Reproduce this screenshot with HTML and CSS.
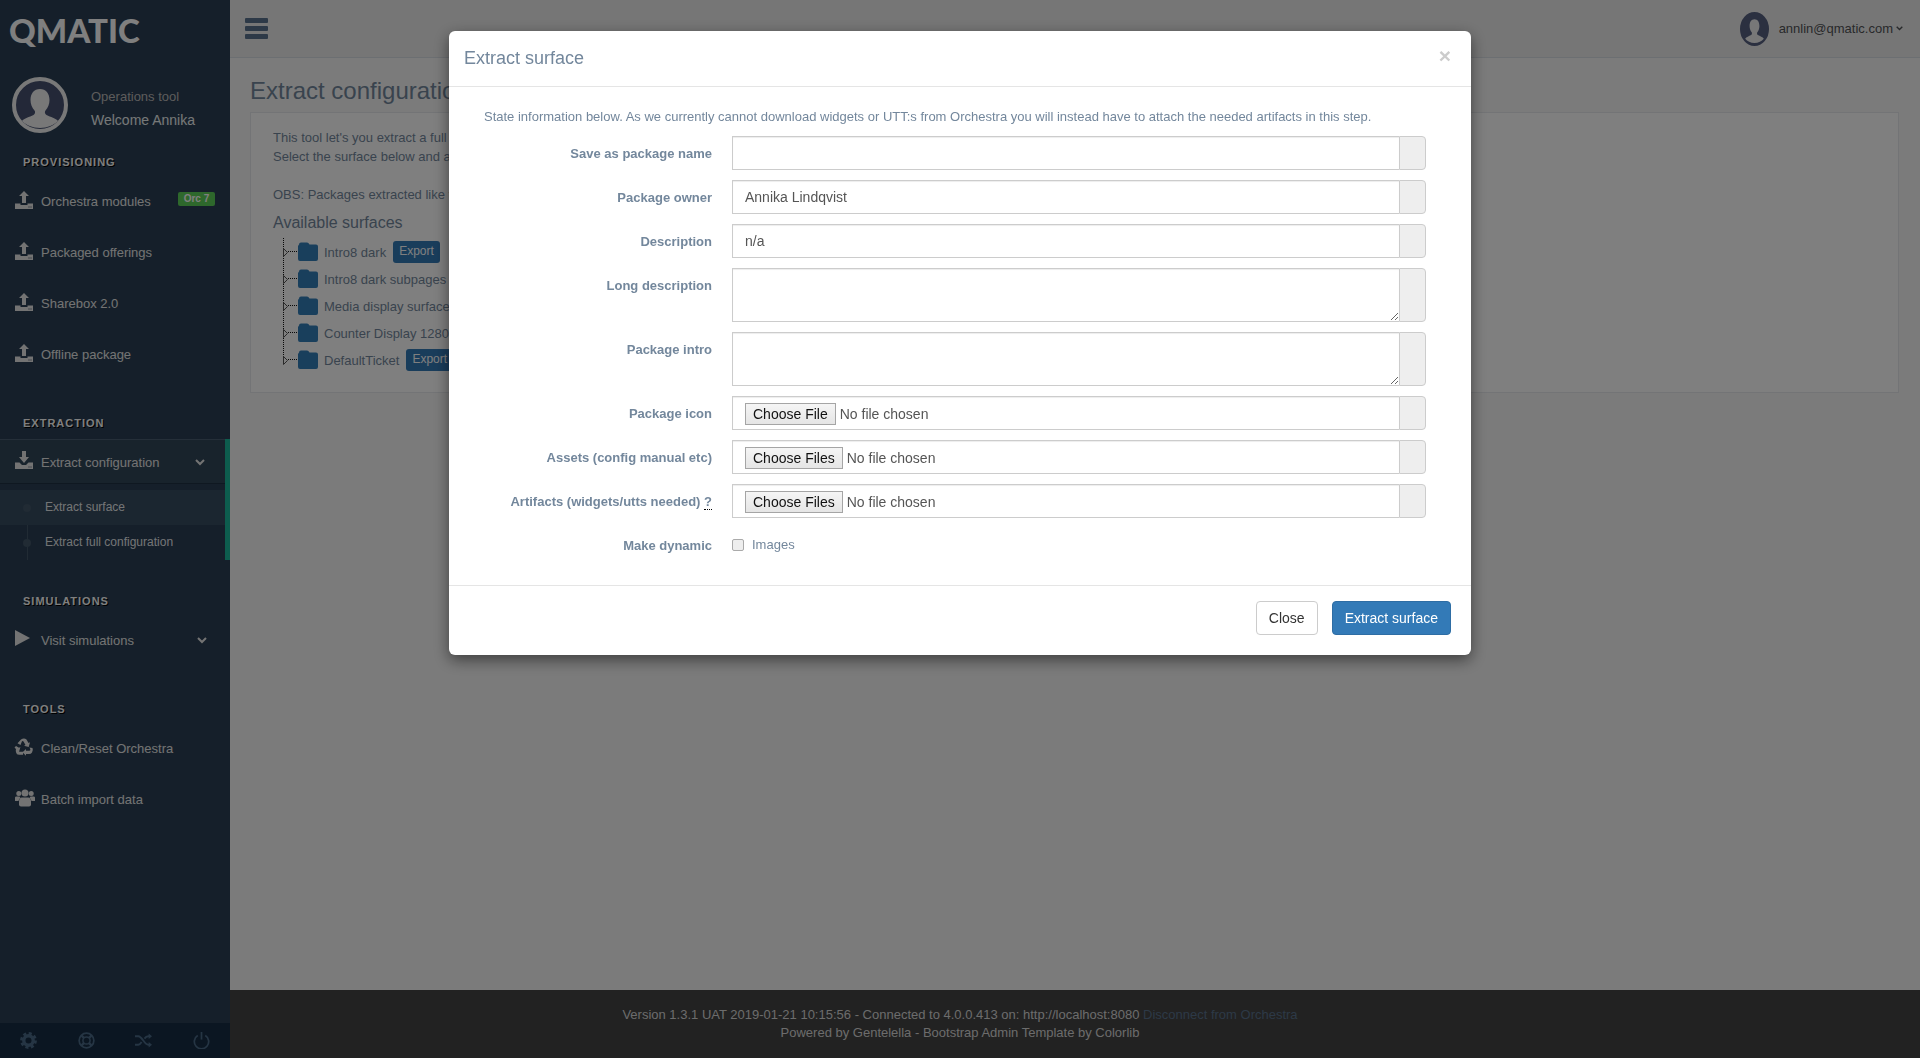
FILE: index.html
```html
<!DOCTYPE html>
<html lang="en">
<head>
<meta charset="utf-8">
<title>Extract surface</title>
<link rel="stylesheet" href="styles.css">
</head>
<body>
<svg class="defs" width="0" height="0" aria-hidden="true">
  <symbol id="i-upload" viewBox="0 0 18 18"><path d="M9 0l5 5h-3v7H7V5H4z"/><path fill-rule="evenodd" d="M0 12.5h5.5V14h7v-1.500H18V18H0zM13.500 15.500h1v1h-1zM15.500 15.500h1v1h-1z"/></symbol>
  <symbol id="i-download" viewBox="0 0 18 18"><path d="M7 0h4v6h3l-5 6-5-6h3z"/><path fill-rule="evenodd" d="M0 11.500h4.500L7 14h4l2.500-2.500H18V18H0zM13.500 15.500h1v1h-1zM15.500 15.500h1v1h-1z"/></symbol>
  <symbol id="i-chev" viewBox="0 0 10 7"><path d="M1 1l4 4 4-4" fill="none" stroke="currentColor" stroke-width="2"/></symbol>
  <symbol id="i-folder" viewBox="0 0 20 19"><path d="M1 2.500Q1 0.500 3 0.500h6q1.500 0 2.500 2H18q2 0 2 2V17q0 2-2 2H2q-2 0-2-2V4z"/></symbol>
  <symbol id="i-person" viewBox="0 0 56 56"><path d="M28 12c6 0 9.500 4.500 9.500 11 0 4-1.500 8-4 10.500-1 1-.8 3.500 1 4.500 4 2 9.500 3.500 11.500 6-4 4-10.500 7-18 7s-14-3-18-7c2-2.500 7.500-4 11.500-6 1.800-1 2-3.500 1-4.500-2.500-2.500-4-6.500-4-10.500 0-6.500 3.500-11 9.500-11z"/></symbol>
</svg>

<div class="page">
  <aside class="sidebar">
    <div class="logo">QMATIC</div>
    <div class="profile">
      <svg class="avatar" viewBox="0 0 56 56"><circle class="avatar-disc" cx="28" cy="28" r="26"/><use href="#i-person" class="avatar-person"/></svg>
      <div class="profile-text">
        <div class="profile-tool">Operations tool</div>
        <div class="profile-name">Welcome Annika</div>
      </div>
    </div>

    <h3 class="side-head">Provisioning</h3>
    <a class="side-item"><svg class="side-icon"><use href="#i-upload"/></svg><span>Orchestra modules</span><span class="badge">Orc 7</span></a>
    <a class="side-item"><svg class="side-icon"><use href="#i-upload"/></svg><span>Packaged offerings</span></a>
    <a class="side-item"><svg class="side-icon"><use href="#i-upload"/></svg><span>Sharebox 2.0</span></a>
    <a class="side-item"><svg class="side-icon"><use href="#i-upload"/></svg><span>Offline package</span></a>

    <h3 class="side-head side-head-gap side-head-tight">Extraction</h3>
    <div class="side-group">
      <a class="side-item side-item-active"><svg class="side-icon"><use href="#i-download"/></svg><span class="side-item-label">Extract configuration</span><svg class="chev chev-active"><use href="#i-chev"/></svg></a>
      <div class="submenu">
        <a class="sub-item sub-item-current">Extract surface</a>
        <a class="sub-item">Extract full configuration</a>
      </div>
    </div>

    <h3 class="side-head side-head-sim">Simulations</h3>
    <a class="side-item"><svg class="side-icon" viewBox="0 0 18 18"><path d="M0 0l15 8-15 8z"/></svg><span>Visit simulations</span><svg class="chev chev-alt"><use href="#i-chev"/></svg></a>

    <h3 class="side-head side-head-gap">Tools</h3>
    <a class="side-item"><svg class="side-icon" viewBox="0 0 18 18"><path d="M6 1.500Q9 -.5 11.500 1.500L13.500 5l1.500-.8-1.300 4.800-4.700-1.200 1.500-.9-2-3.400q-.7-1-1.500-.2L5.500 7 2.500 5.300z"/><path d="M1 8l3 1.700 1.400-.8-1.300 4.800H8v3H4q-2.500 0-3-2.500-.5-2 0-3.200L-.5 9.500z"/><path d="M17.500 10q1 2.500-.5 4.500-1 1.500-3 1.500h-3v1.700L7.500 14.300 11 11v1.700h3.500q1.200-.2.800-1.500L14.500 9.500z"/></svg><span>Clean/Reset Orchestra</span></a>
    <a class="side-item"><svg class="side-icon side-icon-wide" viewBox="0 0 20 18"><circle cx="3.800" cy="4.500" r="2.500"/><circle cx="16.200" cy="4.500" r="2.500"/><circle cx="10" cy="4" r="3.500"/><path d="M0 8.500Q0 7.500 1.500 7.500h3l1 1.500q-1.500.5-2 3H0zM20 8.500q0-1-1.500-1h-3l-1 1.500q1.500.5 2 3H20z"/><path d="M6.500 8.500h7q2.500.5 2.500 4v3q0 2-2 2H6q-2 0-2-2v-3q0-3.500 2.500-4z"/></svg><span>Batch import data</span></a>

    <div class="side-foot">
      <svg class="foot-icon" viewBox="0 0 18 18"><circle cx="9" cy="9" r="5" fill="none" stroke="currentColor" stroke-width="3.600"/><circle cx="9" cy="9" r="7.400" fill="none" stroke="currentColor" stroke-width="3" stroke-dasharray="3.200 2.610"/></svg>
      <svg class="foot-icon" viewBox="0 0 18 18" fill="none" stroke="currentColor"><circle cx="9" cy="9" r="7.800" stroke-width="1.800"/><circle cx="9" cy="9" r="3.800" stroke-width="1.600"/><path d="M3.500 3.500l3 3M14.500 3.500l-3 3M3.500 14.500l3-3M14.500 14.500l-3-3" stroke-width="2.500"/></svg>
      <svg class="foot-icon" viewBox="0 0 18 18" fill="none" stroke="currentColor" stroke-width="2"><path d="M0 4.500h3.500c4 0 6.500 9 10.500 9h1M0 13.500h3.500c1.500 0 2.500-1.200 3.500-2.800M10 7c1-1.400 2.200-2.500 4-2.500h1"/><path d="M14.500 1.500L18 4.500l-3.500 3zM14.500 10.500L18 13.500l-3.500 3z" fill="currentColor" stroke="none"/></svg>
      <svg class="foot-icon" viewBox="0 0 18 18" fill="none" stroke="currentColor" stroke-width="1.800"><path d="M5 3.700a7.600 7.600 0 1 0 8 0"/><path d="M9 0v8"/></svg>
    </div>
  </aside>

  <div class="main">
    <header class="topbar">
      <div class="burger"><span></span><span></span><span></span></div>
      <div class="user">
        <svg class="user-icon" viewBox="0 0 56 56" preserveAspectRatio="none"><ellipse class="user-disc" cx="28" cy="28" rx="28" ry="28"/><use href="#i-person" class="avatar-person"/></svg>
        <span>annlin@qmatic.com</span>
        <svg class="user-chev"><use href="#i-chev"/></svg>
      </div>
    </header>

    <main class="content">
      <h1 class="page-title">Extract configuration</h1>
      <section class="panel">
        <p class="panel-line">This tool let's you extract a full configuration or a single surface.</p>
        <p class="panel-line">Select the surface below and attach what is needed.</p>
        <p class="panel-line panel-line-gap">OBS: Packages extracted like this do not hold widgets.</p>
        <h2 class="panel-head">Available surfaces</h2>
        <ul class="tree">
          <li class="tree-row"><svg class="tree-arrow" viewBox="0 0 5 9"><path d="M.5.500l4 4-4 4z"/></svg><i class="tree-dash"></i><svg class="folder"><use href="#i-folder"/></svg><span>Intro8 dark</span><a class="export">Export</a></li>
          <li class="tree-row"><svg class="tree-arrow" viewBox="0 0 5 9"><path d="M.5.500l4 4-4 4z"/></svg><i class="tree-dash"></i><svg class="folder"><use href="#i-folder"/></svg><span>Intro8 dark subpages</span><a class="export">Export</a></li>
          <li class="tree-row"><svg class="tree-arrow" viewBox="0 0 5 9"><path d="M.5.500l4 4-4 4z"/></svg><i class="tree-dash"></i><svg class="folder"><use href="#i-folder"/></svg><span>Media display surface</span><a class="export">Export</a></li>
          <li class="tree-row"><svg class="tree-arrow" viewBox="0 0 5 9"><path d="M.5.500l4 4-4 4z"/></svg><i class="tree-dash"></i><svg class="folder"><use href="#i-folder"/></svg><span>Counter Display 1280</span><a class="export">Export</a></li>
          <li class="tree-row"><svg class="tree-arrow" viewBox="0 0 5 9"><path d="M.5.500l4 4-4 4z"/></svg><i class="tree-dash"></i><svg class="folder"><use href="#i-folder"/></svg><span>DefaultTicket</span><a class="export">Export</a></li>
        </ul>
      </section>
    </main>

    <footer class="footer">
      <div>Version 1.3.1 UAT 2019-01-21 10:15:56 - Connected to 4.0.0.413 on: http://localhost:8080 <a class="footer-link">Disconnect from Orchestra</a></div>
      <div>Powered by Gentelella - Bootstrap Admin Template by Colorlib</div>
    </footer>
  </div>
</div>

<div class="backdrop">
  <div class="modal">
    <div class="modal-head">
      <h4 class="modal-title">Extract surface</h4>
      <span class="modal-x">×</span>
    </div>
    <div class="modal-body">
      <p class="modal-info">State information below. As we currently cannot download widgets or UTT:s from Orchestra you will instead have to attach the needed artifacts in this step.</p>
      <form class="form">
        <div class="row"><label class="row-label">Save as package name</label><div class="group"><input class="control" type="text"><span class="addon"></span></div></div>
        <div class="row"><label class="row-label">Package owner</label><div class="group"><input class="control" type="text" value="Annika Lindqvist"><span class="addon"></span></div></div>
        <div class="row"><label class="row-label">Description</label><div class="group"><input class="control" type="text" value="n/a"><span class="addon"></span></div></div>
        <div class="row"><label class="row-label">Long description</label><div class="group"><textarea class="control control-area"></textarea><span class="addon"></span></div></div>
        <div class="row"><label class="row-label">Package intro</label><div class="group"><textarea class="control control-area"></textarea><span class="addon"></span></div></div>
        <div class="row"><label class="row-label">Package icon</label><div class="group"><input class="control control-file" type="file"><span class="addon"></span></div></div>
        <div class="row"><label class="row-label">Assets (config manual etc)</label><div class="group"><input class="control control-file" type="file" multiple><span class="addon"></span></div></div>
        <div class="row"><label class="row-label">Artifacts (widgets/utts needed) <abbr class="hint">?</abbr></label><div class="group"><input class="control control-file" type="file" multiple><span class="addon"></span></div></div>
        <div class="row row-last"><label class="row-label">Make dynamic</label><label class="check"><input class="check-box" type="checkbox"><span>Images</span></label></div>
      </form>
    </div>
    <div class="modal-foot">
      <a class="btn btn-default">Close</a>
      <a class="btn btn-primary">Extract surface</a>
    </div>
  </div>
</div>
</body>
</html>
```

FILE: styles.css
```css
* { box-sizing: border-box; }
html, body { margin: 0; height: 100%; }
body {
  font-family: "Liberation Sans", Arial, sans-serif;
  font-size: 13px;
  line-height: 19px;
  color: #73879c;
  background: #f7f7f7;
  overflow: hidden;
}
.defs { position: absolute; }
a { color: inherit; text-decoration: none; }

.page { display: flex; height: 1058px; }

/* sidebar */
.sidebar {
  width: 230px;
  flex: none;
  display: flex;
  flex-direction: column;
  background: #2a3f54;
  color: #e7e7e7;
}
.logo {
  height: 57px;
  padding: 12px 0 0 9px;
  font-family: "Lato", "Liberation Sans", sans-serif;
  font-weight: 900;
  font-size: 33px;
  line-height: 36px;
  color: #fff;
}
.profile { height: 95px; display: flex; align-items: flex-start; padding: 20px 0 0 12px; }
.avatar { width: 56px; height: 56px; flex: none; }
.avatar-disc { fill: #465070; stroke: #f0f0f0; stroke-width: 4; }
.avatar-person { fill: #f0f0f0; }
.profile-text { margin-left: 23px; padding-top: 10px; }
.profile-tool { color: #bab8b8; line-height: 20px; }
.profile-name { color: #ecf0f1; font-size: 14px; line-height: 26px; }

.side-head {
  margin: 0 0 4px;
  height: 20px;
  padding-left: 23px;
  font-size: 11px;
  line-height: 20px;
  font-weight: bold;
  letter-spacing: 1px;
  text-transform: uppercase;
  color: #fff;
  text-shadow: 1px 1px #000;
}
.side-head-gap { margin-top: 33px; }
.side-head-tight { margin-bottom: 6px; }
.side-head-sim { margin-top: 31px; }

.side-item {
  height: 51px;
  flex: none;
  display: flex;
  align-items: center;
  padding: 0 15px;
}
.side-icon { width: 18px; height: 18px; margin-right: 8px; margin-bottom: 4px; fill: #e7e7e7; flex: none; overflow: visible; }
.side-icon-wide { width: 20px; margin-right: 6px; }
.badge {
  margin-left: auto;
  margin-bottom: 6px;
  width: 37px;
  height: 14px;
  border-radius: 2px;
  background: #5cd058;
  color: #fff;
  font-size: 10px;
  font-weight: bold;
  line-height: 13px;
  text-align: center;
}
.chev { width: 10px; height: 7px; margin-left: auto; margin-right: 10px; color: #e7e7e7; flex: none; }
.chev-active { margin-right: 5px; margin-top: 1px; }
.chev-alt { margin-right: 8px; }

.side-group { border-right: 5px solid #1abb9c; height: 121px; flex: none; }
.side-item-active {
  height: 45px;
  background: #314659;
  border-top: 1px solid #4a5f73;
  border-bottom: 1px solid #1f3042;
}
.side-item-active .side-icon { margin-bottom: 3px; }
.side-item-label { padding-top: 1px; }
.submenu { margin-top: 6px; height: 70px; position: relative; }
.submenu::before {
  content: "";
  position: absolute;
  left: 27px;
  top: 0;
  bottom: 0;
  width: 1px;
  background: #425668;
}
.sub-item {
  display: block;
  position: relative;
  height: 35px;
  padding-left: 45px;
  font-size: 12px;
  line-height: 34px;
  color: rgba(255, 255, 255, .9);
}
.sub-item::before {
  content: "";
  position: absolute;
  left: 23px;
  top: 14px;
  width: 8px;
  height: 8px;
  border-radius: 50%;
  background: #425668;
}
.sub-item-current { background: #374c60; }

.side-foot {
  margin-top: auto;
  height: 35px;
  display: grid;
  grid-template-columns: repeat(4, 1fr);
  justify-items: center;
  align-items: center;
  background: #172d44;
  color: #4b6a88;
}
.foot-icon { width: 17px; height: 17px; }

/* main column */
.main { flex: 1; min-width: 0; display: flex; flex-direction: column; }
.topbar {
  height: 58px;
  flex: none;
  display: flex;
  align-items: center;
  justify-content: space-between;
  background: #ededed;
  border-bottom: 1px solid #d9dee4;
  padding: 0 17px 1px 15px;
}
.burger { width: 23px; display: flex; flex-direction: column; gap: 3px; }
.burger span { height: 5px; border-radius: 1px; background: #5a738e; }
.user { display: flex; align-items: center; color: #515356; margin-top: 1px; }
.user-icon { width: 29px; height: 34px; margin-right: 10px; }
.user-disc { fill: #566080; }
.user-chev { width: 7px; height: 5px; margin-left: 3px; color: #515356; }

.content { flex: 1; padding: 0 21px 0 20px; }
.page-title {
  margin: 0;
  padding-top: 18px;
  height: 54px;
  font-size: 24px;
  font-weight: normal;
  line-height: 29px;
  color: #73879c;
}
.panel {
  height: 281px;
  padding: 15px 22px 0;
  background: #fff;
  border: 1px solid #e6e9ed;
}
.panel-line { margin: 0; white-space: nowrap; line-height: 19px; }
.panel-line-gap { margin-top: 19px; }
.panel-head { margin: 9px 0 0; font-size: 16px; font-weight: normal; line-height: 20px; }
.tree {
  list-style: none;
  margin: 5px 0 0 10px;
  padding: 0;
  background: linear-gradient(#111 50%, transparent 50%) 0 0 / 1px 2px repeat-y;
  height: 122px;
}
.tree-row { height: 27px; display: flex; align-items: center; }
.tree-row span { padding-top: 1px; }
.tree-arrow { width: 5px; height: 9px; margin-top: 2px; fill: none; stroke: #555; flex: none; }
.tree-dash { width: 9px; height: 1px; margin-right: 1px; background: linear-gradient(90deg, #111 50%, transparent 50%) 0 0 / 2px 1px repeat-x; flex: none; }
.folder { width: 20px; height: 19px; margin-right: 6px; fill: #337fb9; flex: none; }
.export {
  margin-left: 7px;
  height: 22px;
  padding: 0 6px;
  border-radius: 3px;
  background: #337ab7;
  color: #fff;
  font-size: 12px;
  line-height: 20px;
}

.footer {
  height: 68px;
  flex: none;
  padding: 16px 230px 0 0;
  background: #444;
  color: #d8d8d8;
  font-size: 13px;
  line-height: 18px;
  text-align: center;
}
.footer-link { color: #5a738e; }

/* modal */
.backdrop {
  position: fixed;
  inset: 0;
  display: flex;
  justify-content: center;
  align-items: flex-start;
  background: rgba(0, 0, 0, .5);
  padding-top: 31px;
}
.modal {
  width: 1022px;
  height: 624px;
  background: #fff;
  border-radius: 6px;
  box-shadow: 0 5px 15px rgba(0, 0, 0, .5);
  display: flex;
  flex-direction: column;
}
.modal-head {
  height: 56px;
  flex: none;
  display: flex;
  align-items: center;
  justify-content: space-between;
  padding: 0 20px 2px 15px;
  border-bottom: 1px solid #e5e5e5;
}
.modal-title { margin: 0; font-size: 18px; font-weight: normal; line-height: 24px; color: #73879c; }
.modal-x { font-size: 21px; font-weight: bold; color: #ccc; line-height: 21px; margin-bottom: 4px; }
.modal-body { flex: 1; padding: 20px 0 0 35px; }
.modal-info { margin: 0 0 9px; line-height: 20px; white-space: nowrap; }
.form { display: flex; flex-direction: column; gap: 10px; }
.row { display: grid; grid-template-columns: 228px 694px; column-gap: 20px; align-items: start; }
.row-label { padding-top: 8px; font-weight: bold; text-align: right; line-height: 20px; white-space: nowrap; }
.hint { border-bottom: 1px dotted #000; text-decoration: none; }
.group { display: flex; }
.control {
  flex: 1;
  min-width: 0;
  height: 34px;
  margin: 0;
  padding: 6px 12px;
  border: 1px solid #ccc;
  border-right: 0;
  border-radius: 0;
  background: #fff;
  box-shadow: inset 0 1px 1px rgba(0, 0, 0, .075);
  font-family: inherit;
  font-size: 14px;
  line-height: 20px;
  color: #555;
  outline: none;
}
.control-area { height: 54px; resize: vertical; display: block; }
.control-file { padding: 6px 12px; line-height: 20px; }
.control-file::file-selector-button {
  height: 22px;
  margin-right: 4px;
  padding: 0 7px;
  border: 1px solid #a5a5a5;
  border-radius: 0;
  background: linear-gradient(#f5f5f5, #e5e5e5);
  font-family: inherit;
  font-size: 14px;
  color: #111;
}
.addon {
  width: 27px;
  flex: none;
  background: #eee;
  border: 1px solid #ccc;
  border-radius: 0 4px 4px 0;
}
.check { display: flex; align-items: center; gap: 8px; padding-top: 7px; line-height: 20px; }
.check-box {
  appearance: none;
  width: 12px;
  height: 12px;
  margin: 0;
  flex: none;
  background: #eee;
  border: 1px solid #aaa;
  border-radius: 2px;
}
.modal-foot {
  height: 70px;
  flex: none;
  display: flex;
  justify-content: flex-end;
  align-items: flex-start;
  gap: 14px;
  padding: 15px 20px 0 0;
  border-top: 1px solid #e5e5e5;
}
.btn {
  height: 34px;
  padding: 0 12px;
  border: 1px solid transparent;
  border-radius: 4px;
  font-size: 14px;
  line-height: 32px;
}
.btn-default { background: #fff; border-color: #ccc; color: #333; }
.btn-primary { background: #337ab7; border-color: #2e6da4; color: #fff; }
```
